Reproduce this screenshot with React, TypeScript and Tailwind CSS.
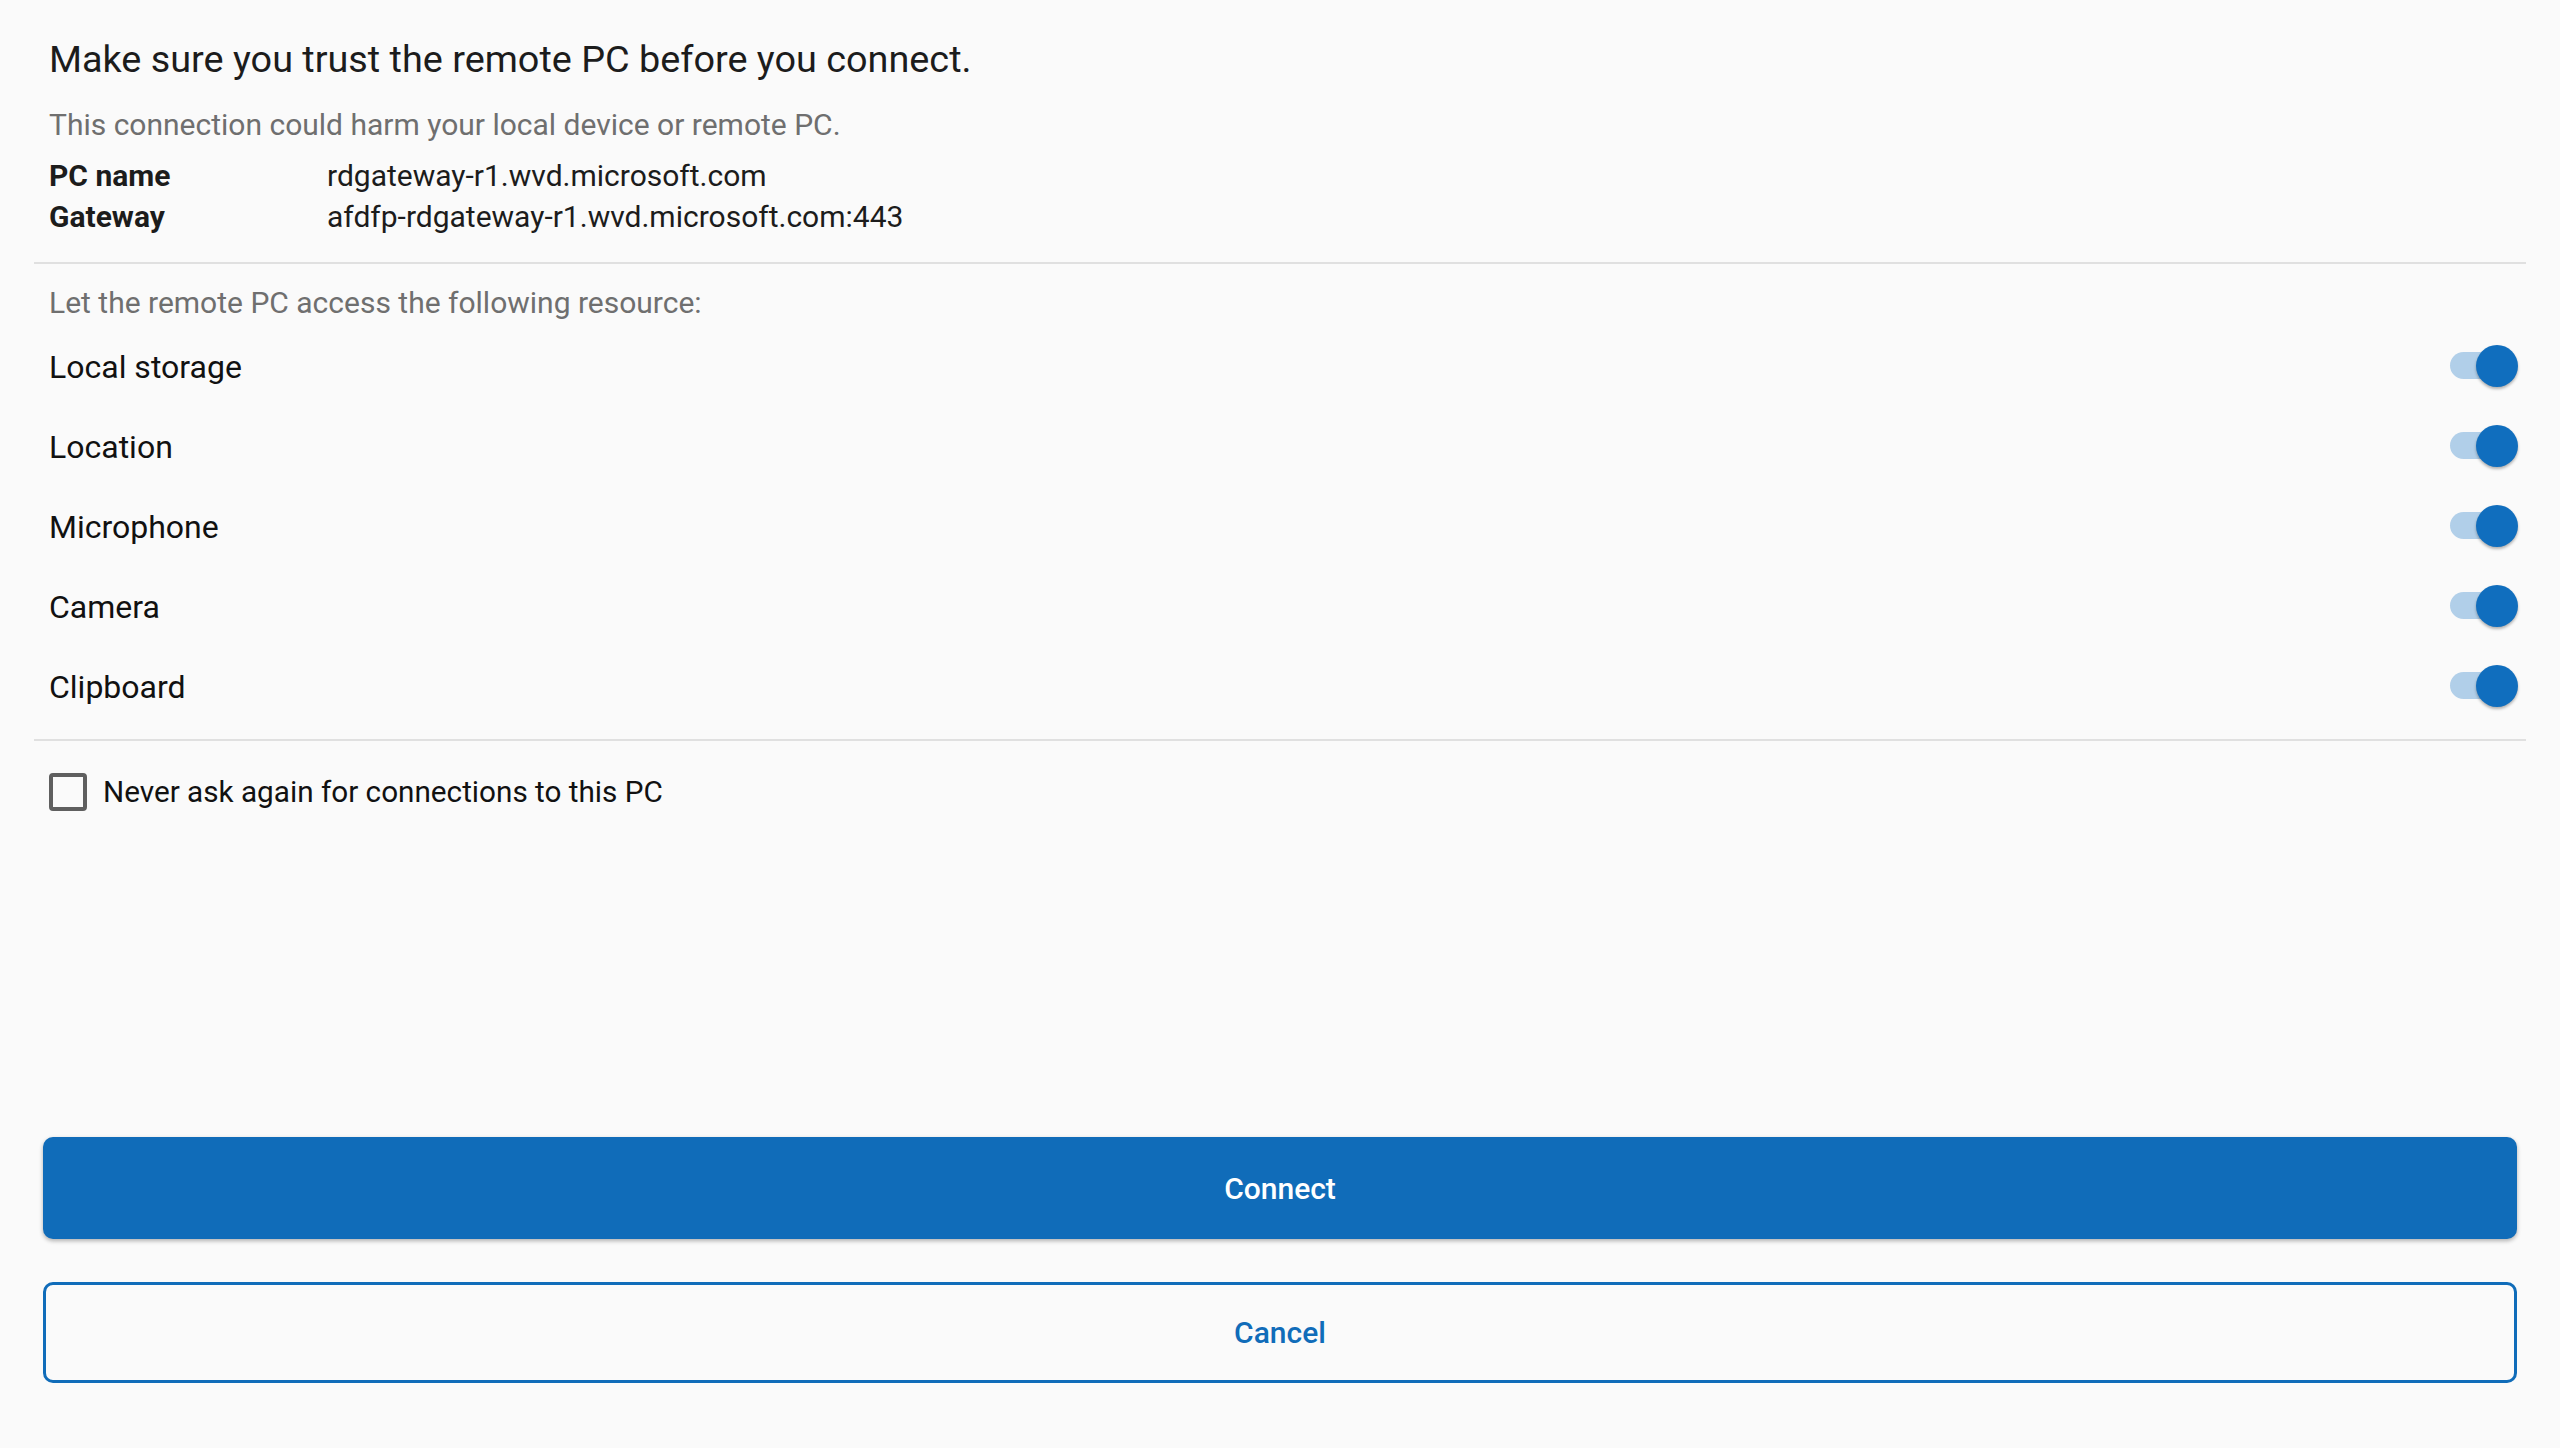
import React from "react";

function Toggle() {
  return (
    <div className="relative w-[68px] h-[44px] flex items-center">
      <div className="w-[60px] h-[27px] rounded-full bg-[#b1cfe9]" />
      <div className="absolute right-0 top-[1px] w-[42px] h-[42px] rounded-full bg-[#106ebe] shadow-[0_2px_3px_rgba(0,0,0,0.3)]" />
    </div>
  );
}

const resources = ["Local storage", "Location", "Microphone", "Camera", "Clipboard"];

export default function App() {
  return (
    <div
      className="min-h-screen w-full bg-[#fafafa] flex flex-col"
      style={{ fontFamily: "Roboto, 'Noto Sans', sans-serif" }}
    >
      <div className="pt-[36px] px-[34px]">
        <div className="px-[15px]">
          <div className="text-[37.8px] leading-[46px] text-[#1c1c1c]">
            Make sure you trust the remote PC before you connect.
          </div>
          <div className="mt-[25px] text-[30px] leading-[36px] text-[#6f6f6f]">
            This connection could harm your local device or remote PC.
          </div>
          <div className="mt-[12px] grid grid-cols-[278px_1fr] text-[30px] leading-[41px] text-[#1c1c1c]">
            <div className="font-bold">PC name</div>
            <div>rdgateway-r1.wvd.microsoft.com</div>
            <div className="font-bold">Gateway</div>
            <div>afdfp-rdgateway-r1.wvd.microsoft.com:443</div>
          </div>
        </div>
        <div className="mt-[25px] h-[2px] bg-[#e0e0e0]" />
        <div className="px-[15px]">
          <div className="mt-[21px] text-[30px] leading-[36px] text-[#6f6f6f]">
            Let the remote PC access the following resource:
          </div>
          <div className="mt-[6px] flex flex-col">
            {resources.map((r) => (
              <div key={r} className="h-[80px] flex items-center justify-between">
                <span className="text-[32px] leading-[80px] text-[#111111]">{r}</span>
                <div className="mr-[-7px] mt-[-3px]">
                  <Toggle />
                </div>
              </div>
            ))}
          </div>
        </div>
        <div className="mt-[12px] h-[2px] bg-[#e0e0e0]" />
        <div className="mt-[32px] pl-[15px] flex items-center gap-[16px] h-[38px]">
          <div className="w-[38px] h-[38px] rounded-[4px] border-[4px] border-[#5f5f5f]" />
          <span className="text-[29.7px] leading-[38px] text-[#111111]">
            Never ask again for connections to this PC
          </span>
        </div>
      </div>
      <div className="mt-auto px-[43px] pb-[65px] flex flex-col gap-[43px]">
        <button className="h-[102px] w-full rounded-[10px] bg-[#106cb9] text-white text-[30px] font-medium shadow-[0_2px_4px_rgba(0,0,0,0.3)]">
          Connect
        </button>
        <button className="h-[101px] w-full rounded-[10px] border-[3px] border-[#106cb9] text-[#106cb9] text-[30px] font-medium">
          Cancel
        </button>
      </div>
    </div>
  );
}
